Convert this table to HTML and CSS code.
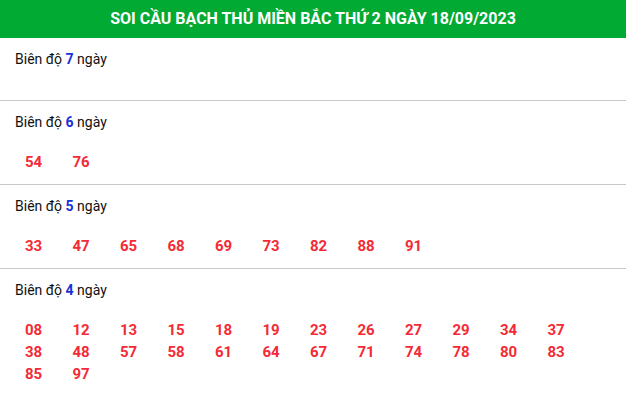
FILE: index.html
```html
<!DOCTYPE html>
<html lang="vi">
<head>
<meta charset="utf-8">
<link rel="stylesheet" href="styles.css">
</head>
<body>
<div class="box">
  <h2 class="title">SOI CẦU BẠCH THỦ MIỀN BẮC THỨ 2 NGÀY 18/09/2023</h2>
  <div class="sec">
    <div class="label">Biên độ <b>7</b> ngày</div>
    <div class="nums empty"></div>
  </div>
  <div class="sec">
    <div class="label">Biên độ <b>6</b> ngày</div>
    <div class="nums"><span>54</span><span>76</span></div>
  </div>
  <div class="sec">
    <div class="label">Biên độ <b>5</b> ngày</div>
    <div class="nums"><span>33</span><span>47</span><span>65</span><span>68</span><span>69</span><span>73</span><span>82</span><span>88</span><span>91</span></div>
  </div>
  <div class="sec last">
    <div class="label">Biên độ <b>4</b> ngày</div>
    <div class="nums"><span>08</span><span>12</span><span>13</span><span>15</span><span>18</span><span>19</span><span>23</span><span>26</span><span>27</span><span>29</span><span>34</span><span>37</span><span>38</span><span>48</span><span>57</span><span>58</span><span>61</span><span>64</span><span>67</span><span>71</span><span>74</span><span>78</span><span>80</span><span>83</span><span>85</span><span>97</span></div>
  </div>
</div>
</body>
</html>
```
FILE: styles.css
```css
* { box-sizing: border-box; }
html, body { margin: 0; padding: 0; background: #fff; }
body { font-family: Roboto, "Noto Sans", sans-serif; color: #111; }
.title {
  margin: 0;
  height: 38px;
  background: #00aa33;
  color: #fff;
  font-size: 16px;
  font-weight: 700;
  text-align: center;
  line-height: 38px;
  letter-spacing: 0;
}
.sec {
  border-bottom: 1px solid #c8c8c8;
  padding: 11px 15px 11px;
}
.sec.last { border-bottom: none; }
.label {
  font-size: 14px;
  line-height: 20px;
}
.label b { color: #1830d8; font-weight: 700; }
.nums {
  margin-top: 19px;
  padding-left: 10px;
  display: grid;
  grid-template-columns: repeat(12, 47.5px);
  font-size: 15px;
  font-weight: 700;
  color: #f42a35;
  line-height: 22px;
}
.nums.empty { margin-top: 0; height: 20px; }
```
